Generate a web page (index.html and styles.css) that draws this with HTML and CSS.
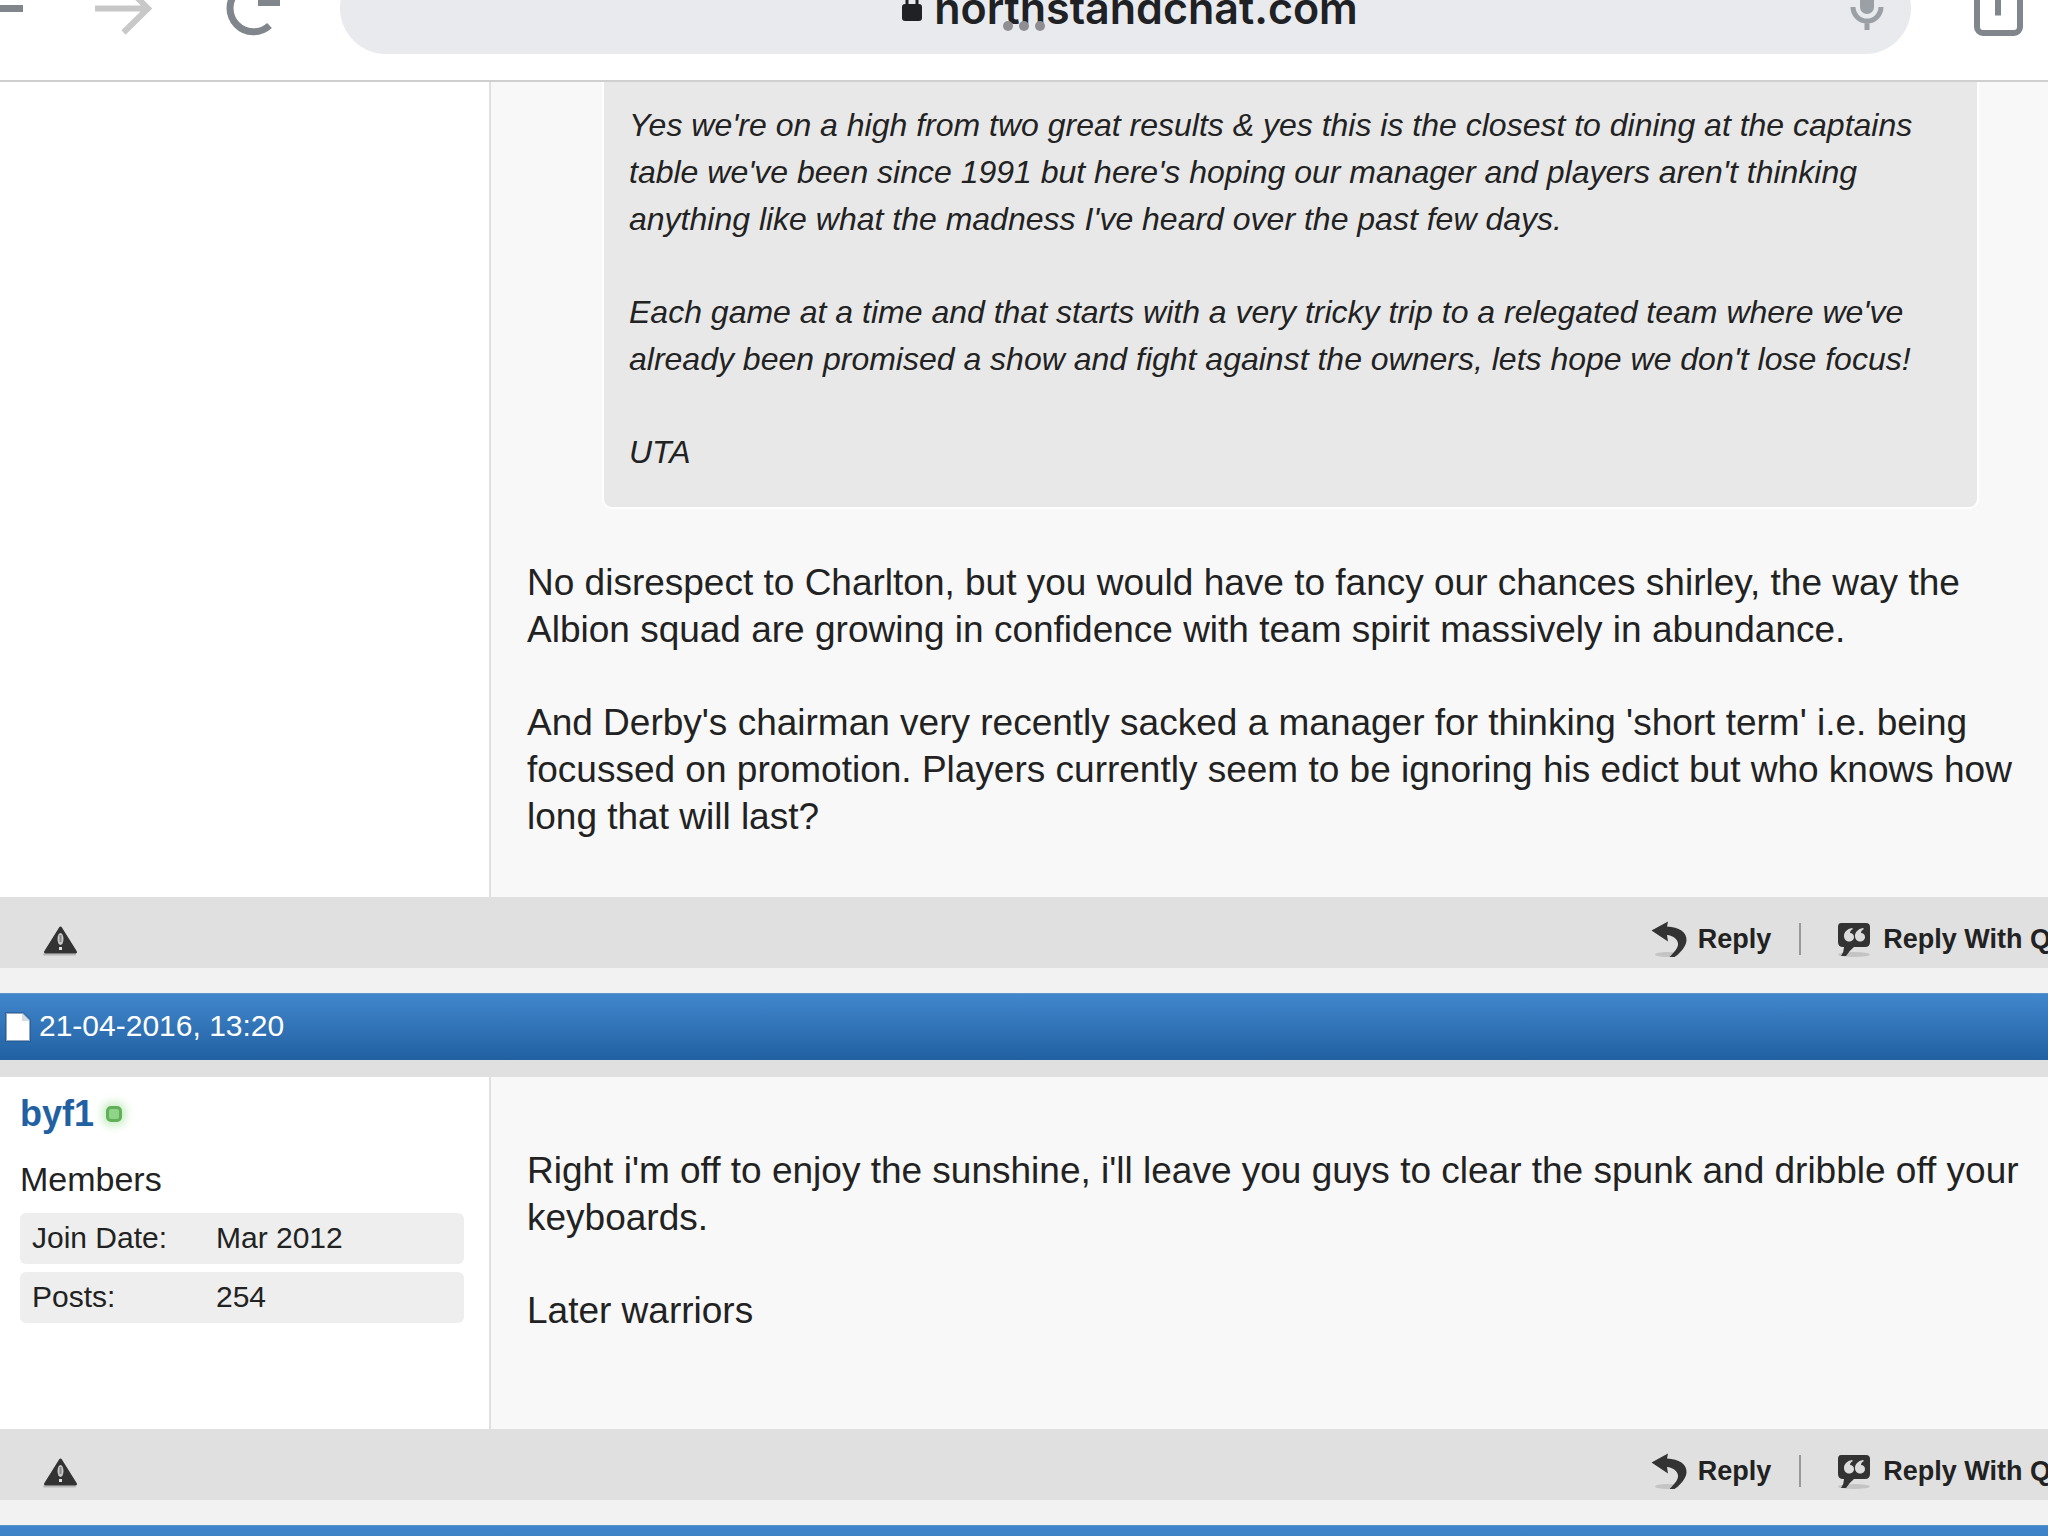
FILE: index.html
```html
<!DOCTYPE html>
<html lang="en">
<head>
<meta charset="utf-8">
<title>northstandchat.com</title>
<link rel="stylesheet" href="styles.css">
</head>
<body>
<svg class="symbols" aria-hidden="true">
  <symbol id="warn" viewBox="0 0 36 32">
    <path d="M2 29.500h31" stroke="#b8b8b8" stroke-width="2" stroke-linecap="round"/>
    <path d="M18.500 3 33.500 27H3.500z" fill="#333" stroke="#333" stroke-width="3" stroke-linejoin="round"/>
    <ellipse cx="18.500" cy="14" rx="3" ry="6" fill="#c8c8c8"/>
    <path d="M18.500 10v7" stroke="#888" stroke-width="2"/>
    <rect x="17" y="22" width="3" height="3" fill="#e0e0e0"/>
  </symbol>
  <symbol id="reply" viewBox="0 0 38 38">
    <ellipse cx="17" cy="34.500" rx="12" ry="2.500" fill="#c4c4c4"/>
    <path d="M1.500 10.500 18 1.500l-1 5C29 7 37 12 36.500 20.500 36 27 30 33 24.500 37h-5c5-5 9-9.500 8.500-13.500-.5-4.500-5-8-11-8.500l1 6.500z" fill="#333"/>
  </symbol>
  <symbol id="quote" viewBox="0 0 38 38">
    <ellipse cx="19" cy="34.500" rx="16" ry="2.500" fill="#c4c4c4"/>
    <path d="M6 3h25q4 0 4 4v15q0 5-5 5H19q-5 4-8 9H6q3-4 3-9H8q-5 0-5-5V7q0-4 3-4z" fill="#333"/>
    <path d="M17 8c-5 1-8 4-8 8 0 3 2 5.500 5 5.500s5-2 5-4.500-2-4-4-4c0-2 1-3 3-4zM28 8c-5 1-8 4-8 8 0 3 2 5.500 5 5.500s5-2 5-4.500-2-4-4-4c0-2 1-3 3-4z" fill="#dcdcdc"/>
  </symbol>
</svg>

<header class="browser">
  <div class="browser-row">
    <nav class="nav">
      <button class="icon-btn" aria-label="Back">
        <svg width="57" height="58" viewBox="-34 -21 57 58"><path d="M23 8.500H-27M-5-16-29 8.500-15 22" fill="none" stroke="#80868b" stroke-width="7"/></svg>
      </button>
      <button class="icon-btn" aria-label="Forward" disabled>
        <svg width="57" height="58" viewBox="95 -21 57 58"><path d="M95 8.500h52M123.500-16 148 8.500l-24.500 24" fill="none" stroke="#c8c8c8" stroke-width="6"/></svg>
      </button>
      <button class="icon-btn" aria-label="Reload">
        <svg width="60" height="58" viewBox="224 -21 60 58"><path d="M269.500 25.500A23.500 23.500 0 1 1 270-8.500M276.500-18V2.500H258" fill="none" stroke="#80868b" stroke-width="7"/></svg>
      </button>
    </nav>
    <div class="address">
      <button class="url">
        <svg width="20" height="30" viewBox="0 0 20 30"><path d="M5 13V7a5 5 0 0 1 10 0v6" fill="none" stroke="#202124" stroke-width="3"/><rect y="11" width="20" height="17" rx="3" fill="#202124"/></svg>
        <span>northstandchat.com</span>
      </button>
      <button class="icon-btn" aria-label="Voice search">
        <svg width="34" height="46" viewBox="0 0 34 46"><rect x="10" y="0" width="14" height="29" rx="7" fill="#9aa0a6"/><path d="M3 22a14 14 0 0 0 28 0M17 36v9" fill="none" stroke="#9aa0a6" stroke-width="5"/></svg>
      </button>
    </div>
    <button class="icon-btn" aria-label="Share">
      <svg width="56" height="58" viewBox="1967 -21 56 58"><rect x="1977" y="-10" width="43" height="43" rx="6" fill="none" stroke="#80868b" stroke-width="6"/><path d="M1998 15.500V-19" stroke="#80868b" stroke-width="6"/></svg>
    </button>
  </div>
  <div class="dots" aria-hidden="true"><i></i><i></i><i></i></div>
</header>

<main>
  <article class="post">
    <div class="post-main">
      <aside class="author"></aside>
      <div class="content quoted">
        <blockquote class="quote">
          <p>Yes we're on a high from two great results &amp; yes this is the closest to dining at the captains table we've been since 1991 but here's hoping our manager and players aren't thinking anything like what the madness I've heard over the past few days.</p>
          <p>Each game at a time and that starts with a very tricky trip to a relegated team where we've already been promised a show and fight against the owners, lets hope we don't lose focus!</p>
          <p>UTA</p>
        </blockquote>
        <p>No disrespect to Charlton, but you would have to fancy our chances shirley, the way the Albion squad are growing in confidence with team spirit massively in abundance.</p>
        <p>And Derby's chairman very recently sacked a manager for thinking 'short term' i.e. being focussed on promotion. Players currently seem to be ignoring his edict but who knows how long that will last?</p>
      </div>
    </div>
    <footer class="post-foot">
      <a class="report" href="#report" aria-label="Report post"><svg width="36" height="32"><use href="#warn"/></svg></a>
      <div class="actions">
        <a class="action" href="#reply"><svg width="38" height="38"><use href="#reply"/></svg>Reply</a>
        <span class="sep"></span>
        <a class="action" href="#quote"><svg width="38" height="38"><use href="#quote"/></svg>Reply With Quote</a>
      </div>
    </footer>
  </article>

  <article class="post">
    <div class="post-head">
      <svg width="28" height="32" viewBox="0 0 28 32"><path d="M2 2h17l7 7v21H2z" fill="#fff" stroke="#1f4f82" stroke-opacity=".5" stroke-width="2"/><path d="M18 2.500V10h7.500z" fill="#d5dbe2"/></svg>
      <time datetime="2016-04-21T13:20">21-04-2016, 13:20</time>
    </div>
    <div class="post-main">
      <aside class="author">
        <div class="user"><a href="#byf1">byf1</a><span class="online" role="img" aria-label="Online"></span></div>
        <p class="rank">Members</p>
        <dl class="stats">
          <div class="stat"><dt>Join Date:</dt><dd>Mar 2012</dd></div>
          <div class="stat"><dt>Posts:</dt><dd>254</dd></div>
        </dl>
      </aside>
      <div class="content plain">
        <p>Right i'm off to enjoy the sunshine, i'll leave you guys to clear the spunk and dribble off your keyboards.</p>
        <p>Later warriors</p>
      </div>
    </div>
    <footer class="post-foot">
      <a class="report" href="#report2" aria-label="Report post"><svg width="36" height="32"><use href="#warn"/></svg></a>
      <div class="actions">
        <a class="action" href="#reply2"><svg width="38" height="38"><use href="#reply"/></svg>Reply</a>
        <span class="sep"></span>
        <a class="action" href="#quote2"><svg width="38" height="38"><use href="#quote"/></svg>Reply With Quote</a>
      </div>
    </footer>
  </article>

  <article class="post">
    <div class="post-head"></div>
  </article>
</main>
</body>
</html>
```
FILE: styles.css
```css
* { box-sizing: border-box; }
body {
  margin: 0;
  height: 100vh;
  overflow: hidden;
  background: #f2f2f2;
  color: #222;
  font-family: "Liberation Sans", Arial, sans-serif;
}
p, dl, dd, blockquote { margin: 0; }
a { color: inherit; text-decoration: none; }
svg { display: block; flex: none; }
button { padding: 0; border: 0; background: none; font: inherit; color: inherit; }
.symbols { position: absolute; width: 0; height: 0; }

/* Browser toolbar, partly scrolled off the top */
.browser {
  display: flow-root;
  position: relative;
  padding-bottom: 26px;
  background: #fff;
  border-bottom: 2px solid #cfcfcf;
}
.browser-row {
  display: flex;
  align-items: center;
  gap: 56px;
  height: 92px;
  margin-top: -38px;
  padding-right: 25px;
}
.nav { display: flex; gap: 72px; margin-left: -34px; }
.address {
  flex: 1;
  display: flex;
  align-items: center;
  height: 92px;
  padding-right: 27px;
  border-radius: 46px;
  background: #e8eaed;
}
.url {
  flex: 1;
  display: flex;
  align-items: center;
  justify-content: center;
  gap: 12px;
  padding-left: 70px;
  color: #202124;
  font: 600 43px/54px Inter, "Liberation Sans", sans-serif;
}
.dots {
  position: absolute;
  top: 21px;
  left: 0;
  right: 0;
  display: flex;
  justify-content: center;
  gap: 6px;
}
.dots i { width: 10px; height: 10px; border-radius: 50%; background: #8e8e93; }

/* Posts */
.post { margin-bottom: 25px; }
.post-main { display: flex; }
.author {
  flex: none;
  width: 491px;
  padding: 24px 25px 0 20px;
  background: #fff;
  border-right: 2px solid #e0e0e0;
}
.content {
  flex: 1;
  padding: 0 20px 0 36px;
  background: #f8f8f8;
  font-size: 37px;
  line-height: 47px;
}
.content p + p { margin-top: 46px; }
.quoted { padding-bottom: 57px; }
.plain { padding-top: 70px; padding-bottom: 95px; }
.quote {
  margin: 0 49px 50px 75px;
  padding: 20px 24px 31px 25px;
  border: 2px solid #fff;
  border-top: 0;
  border-radius: 0 0 10px 10px;
  background: #e8e8e8;
  font-size: 32px;
  font-style: italic;
}

.post-head {
  display: flex;
  align-items: center;
  gap: 7px;
  height: 67px;
  padding-left: 4px;
  background: linear-gradient(#4186cc, #2161a2);
  border-top: 1px solid #5b93cb;
  color: #fff;
  font-size: 30px;
}
.post-head time { padding-bottom: 3px; }
.post-head + .post-main { border-top: 17px solid #e0e0e0; }

.user {
  display: flex;
  align-items: center;
  gap: 12px;
  color: #2161a2;
  font-size: 36px;
  font-weight: bold;
  line-height: 26px;
}
.online {
  width: 16px;
  height: 16px;
  border: 3px solid #5fb057;
  border-radius: 5px;
  background: #8fd488;
  box-shadow: 0 0 8px 4px #c9edc5;
}
.rank { margin-top: 32px; font-size: 34px; line-height: 40px; }
.stats { display: flex; flex-direction: column; gap: 8px; margin-top: 14px; }
.stat {
  display: flex;
  height: 51px;
  padding: 0 12px;
  border-radius: 6px;
  background: #eee;
  font-size: 30px;
  line-height: 50px;
}
.stat dt { width: 184px; }

.post-foot {
  display: flex;
  align-items: center;
  justify-content: space-between;
  height: 71px;
  margin-right: -60px;
  padding-left: 42px;
  background: #e0e0e0;
}
.report { padding-top: 16px; }
.actions { display: flex; align-items: center; gap: 28px; padding-top: 12px; }
.action {
  display: flex;
  align-items: center;
  gap: 10px;
  font-size: 27px;
  font-weight: bold;
  line-height: 30px;
  white-space: nowrap;
}
.sep { width: 2px; height: 32px; margin-right: 6px; background: #999; }
```
